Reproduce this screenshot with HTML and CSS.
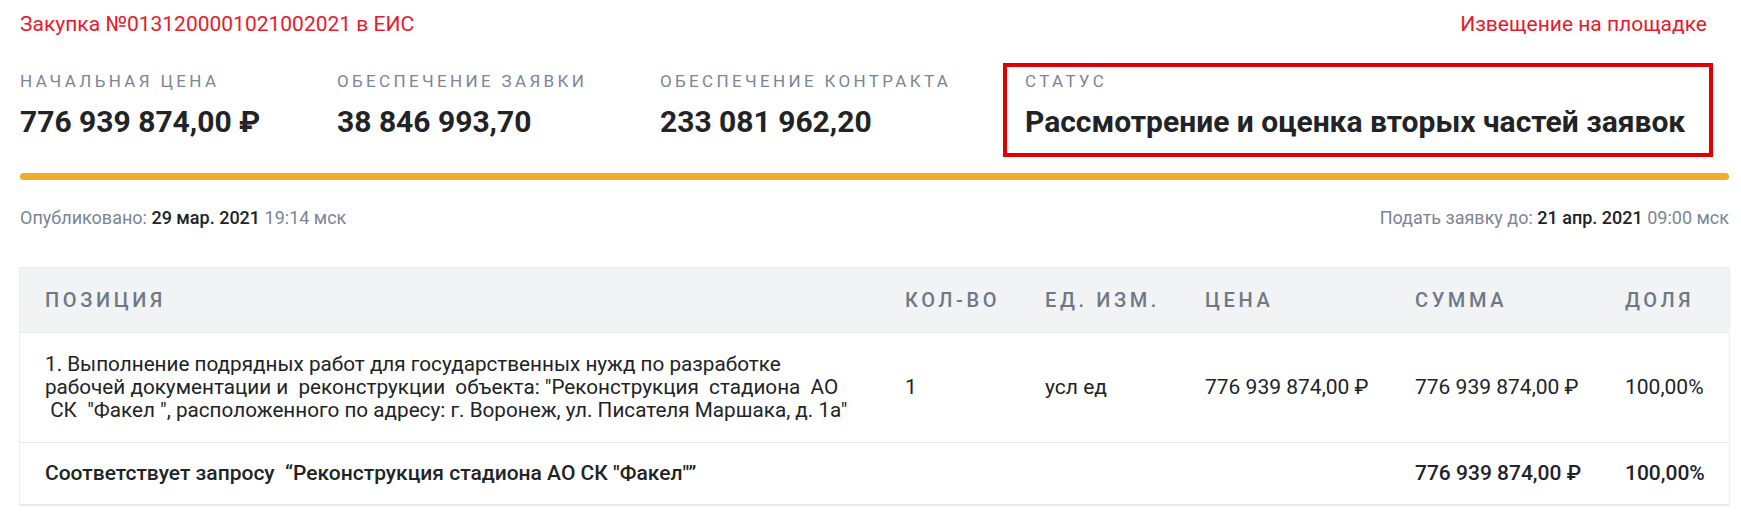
FILE: index.html
```html
<!DOCTYPE html>
<html>
<head>
<meta http-equiv="Content-Type" content="text/html; charset=utf-8"/>
<title>Закупка №0131200001021002021</title>
<link rel="stylesheet" href="styles.css">
</head>
<body>
<div class="page">

  <div class="top-links">
    <a href="#">Закупка №0131200001021002021 в ЕИС</a>
    <a href="#" class="notice">Извещение на площадке</a>
  </div>

  <div class="summary">
    <div class="summary-item">
      <div class="label">Начальная цена</div>
      <div class="value">776 939 874,00 ₽</div>
    </div>
    <div class="summary-item">
      <div class="label">Обеспечение заявки</div>
      <div class="value">38 846 993,70</div>
    </div>
    <div class="summary-item">
      <div class="label">Обеспечение контракта</div>
      <div class="value">233 081 962,20</div>
    </div>
    <div class="summary-item status">
      <div class="label">Статус</div>
      <div class="value">Рассмотрение и оценка вторых частей заявок</div>
    </div>
  </div>

  <div class="progress"></div>

  <div class="dates">
    <div>Опубликовано: <b>29 мар. 2021</b> 19:14 мск</div>
    <div>Подать заявку до: <b>21 апр. 2021</b> 09:00 мск</div>
  </div>

  <table class="positions">
    <colgroup>
      <col class="c-name">
      <col class="c-qty">
      <col class="c-unit">
      <col class="c-price">
      <col class="c-sum">
      <col class="c-share">
    </colgroup>
    <thead>
      <tr>
        <th>Позиция</th>
        <th>Кол-во</th>
        <th>Ед. изм.</th>
        <th>Цена</th>
        <th>Сумма</th>
        <th>Доля</th>
      </tr>
    </thead>
    <tbody>
      <tr>
        <td class="name">1. Выполнение подрядных работ для государственных нужд по разработке<br>рабочей документации и&nbsp; реконструкции&nbsp; объекта: "Реконструкция&nbsp; стадиона&nbsp; АО<br>&nbsp;СК&nbsp; "Факел&nbsp;", расположенного по адресу: г. Воронеж, ул. Писателя Маршака, д. 1а"</td>
        <td>1</td>
        <td>усл ед</td>
        <td>776 939 874,00 ₽</td>
        <td>776 939 874,00 ₽</td>
        <td>100,00%</td>
      </tr>
      <tr class="total">
        <td class="name">Соответствует запросу&nbsp; “Реконструкция стадиона АО СК "Факел"”</td>
        <td></td>
        <td></td>
        <td></td>
        <td>776 939 874,00 ₽</td>
        <td>100,00%</td>
      </tr>
    </tbody>
  </table>

</div>
</body>
</html>
```

FILE: styles.css
```css
body {
  margin: 0;
  font-family: Roboto, "Liberation Sans", sans-serif;
  background-color: white;
  color: #212326;
}

.page {
  padding: 12px 12px 12px 20px;
}

a {
  color: #e8192c;
  text-decoration: none;
}

.top-links {
  display: flex;
  justify-content: space-between;
  font-size: 21px;
  line-height: 24px;
}

.top-links .notice {
  margin-right: 22px;
}

.summary {
  display: grid;
  grid-template-columns: 317px 323px 343px 710px;
  margin-top: 27px;
}

.summary-item {
  padding: 8px 0 15px;
}

.label {
  font-size: 17px;
  line-height: 20px;
  letter-spacing: 3.35px;
  text-transform: uppercase;
  color: #7b8594;
}

.value {
  margin-top: 11px;
  font-size: 30px;
  line-height: 40px;
  font-weight: bold;
}

.status {
  border: 4px solid #e10000;
  padding: 4px 18px 11px;
}

.progress {
  height: 7px;
  margin-top: 16px;
  border-radius: 4px;
  background-color: #efad2b;
}

.dates {
  display: flex;
  justify-content: space-between;
  margin-top: 27px;
  font-size: 18px;
  line-height: 22px;
  color: #7b8594;
}

.dates b {
  font-weight: 500;
  color: #212326;
}

.positions {
  width: 100%;
  margin-top: 39px;
  border-collapse: collapse;
  table-layout: fixed;
  box-shadow: 0 0 0 1px #eceef1, 0 1px 3px rgba(0, 0, 0, 0.06);
}

.c-name { width: 860px; }
.c-qty { width: 140px; }
.c-unit { width: 160px; }
.c-price { width: 210px; }
.c-sum { width: 210px; }

.positions th {
  height: 64px;
  padding: 0 25px;
  text-align: left;
  font-size: 20px;
  font-weight: 500;
  letter-spacing: 3.6px;
  text-transform: uppercase;
  white-space: nowrap;
  color: #6f7986;
  background-color: #f2f3f5;
  border-bottom: 1px solid #e6e8eb;
}

.positions td {
  padding: 20px 25px;
  font-size: 21px;
  line-height: 23px;
  vertical-align: middle;
  border-bottom: 1px solid #e6e8eb;
  white-space: nowrap;
}

.positions td.name {
  font-size: 20.7px;
}

.positions .total td {
  padding-top: 19px;
  padding-bottom: 19px;
  font-weight: 500;
}

.positions .total td.name {
  font-size: 21px;
}
```
